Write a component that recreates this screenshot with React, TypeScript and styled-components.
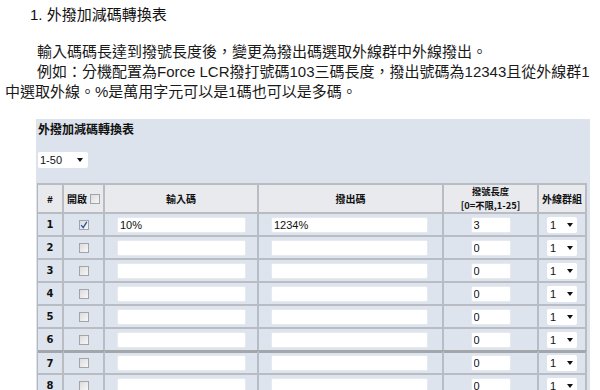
import React from "react";
import styled, { createGlobalStyle } from "styled-components";

const GlobalStyle = createGlobalStyle`
  html, body { margin: 0; padding: 0; background: #fff; }
  body {
    font-family: "Liberation Sans", "Noto Sans CJK TC", sans-serif;
    color: #111;
  }
`;

const Page = styled.div`
  width: 600px;
  height: 390px;
  overflow: hidden;
  padding-top: 6px;
  box-sizing: border-box;
`;

const Heading = styled.h1`
  margin: 0 0 0 30px;
  font-size: 15px;
  font-weight: normal;
  line-height: 18px;
  color: #111;
`;

const Body = styled.div`
  margin-top: 18px;
  padding-left: 5px;
  font-size: 15px;
  line-height: 20px;
  color: #1a1a1a;
`;

const Line = styled.div<{ $indent?: boolean }>`
  white-space: nowrap;
  padding-left: ${(p) => (p.$indent ? "32px" : "0")};
`;

const Panel = styled.section`
  margin: 17px 0 0 36px;
  width: 554px;
  height: 290px;
  box-sizing: border-box;
  background: #dce3ec;
  padding: 2px 3px 0 1px;
`;

const PanelTitle = styled.h2`
  margin: 0 0 0 1px;
  font-family: "Noto Sans CJK TC", sans-serif;
  font-size: 12px;
  font-weight: bold;
  line-height: 16px;
  color: #111;
`;

const Dropdown = styled.div<{ $width: number }>`
  width: ${(p) => p.$width}px;
  height: 16px;
  box-sizing: border-box;
  background: #fff;
  border-radius: 2px;
  display: flex;
  align-items: center;
  justify-content: space-between;
  padding: 0 4px 0 3px;
  font-size: 11px;
  color: #111;
`;

const PageDropdown = styled(Dropdown)`
  margin: 15px 0 0 1px;
  padding-left: 2px;
  padding-right: 5px;
`;

const Arrow = styled.span`
  width: 0;
  height: 0;
  border-left: 3.5px solid transparent;
  border-right: 3.5px solid transparent;
  border-top: 4px solid #111;
`;

const Grid = styled.div`
  margin-top: 15px;
  display: grid;
  grid-template-columns: 26px 41px 154px 185px 95px 48px;
  border-left: 1px solid #b4b8be;
  border-bottom: 2px solid #b4b8be;
`;

const Cell = styled.div<{ $head?: boolean; $thick?: boolean; $align?: "left" | "center"; $pad?: number }>`
  box-sizing: border-box;
  height: ${(p) => (p.$head ? "29px" : "23px")};
  border-top: ${(p) => (p.$thick ? "3px solid #a3a7ac" : "2px solid #b9bdc3")};
  border-right: 2px solid #b9bdc3;
  background: ${(p) => (p.$head ? "#e8eaed" : "#dde4ed")};
  display: flex;
  align-items: center;
  justify-content: ${(p) => (p.$align === "left" ? "flex-start" : "center")};
  padding-left: ${(p) => p.$pad ?? 0}px;
`;

const HeadText = styled.span`
  font-family: "Noto Sans CJK TC", sans-serif;
  font-size: 10px;
  font-weight: bold;
  line-height: 12px;
  color: #111;
  display: inline-flex;
  align-items: center;
  gap: 3px;
`;

const HeadStack = styled.span`
  display: flex;
  flex-direction: column;
  align-items: center;
  font-family: "Noto Sans CJK TC", sans-serif;
  font-size: 9.3px;
  font-weight: bold;
  line-height: 13.5px;
  color: #111;
`;

const RowNum = styled.span`
  font-family: "DejaVu Sans", sans-serif;
  font-size: 10px;
  font-weight: bold;
  color: #111;
`;

const Box = styled.span`
  width: 10px;
  height: 10px;
  box-sizing: border-box;
  border: 1px solid #a2a4a8;
  background: linear-gradient(135deg, #dcdcdc, #f7f7f7);
  display: inline-flex;
  align-items: center;
  justify-content: center;
`;

const Field = styled.input<{ $width: number }>`
  width: ${(p) => p.$width}px;
  height: 16px;
  box-sizing: border-box;
  margin: 0;
  border: 1px solid #e6e9ee;
  border-radius: 2px;
  background: #fff;
  padding: 0 2px;
  font-family: "Liberation Sans", sans-serif;
  font-size: 11px;
  color: #111;
  outline: none;
`;

function Check({ checked }: { checked?: boolean }) {
  return (
    <Box>
      {checked && (
        <svg width="8" height="8" viewBox="0 0 8 8">
          <path d="M1.2 4.2 L3.2 6.6 L6.8 0.8" fill="none" stroke="#2a4fa8" strokeWidth="1.3" />
        </svg>
      )}
    </Box>
  );
}

const rows = [
  { n: 1, on: true, input: "10%", out: "1234%", len: "3" },
  { n: 2, input: "", out: "", len: "0" },
  { n: 3, input: "", out: "", len: "0" },
  { n: 4, input: "", out: "", len: "0" },
  { n: 5, input: "", out: "", len: "0" },
  { n: 6, input: "", out: "", len: "0" },
  { n: 7, input: "", out: "", len: "0" },
  { n: 8, input: "", out: "", len: "0" },
];

export default function App() {
  return (
    <>
      <GlobalStyle />
      <Page>
        <Heading>1. 外撥加減碼轉換表</Heading>
        <Body>
          <Line $indent>輸入碼碼長達到撥號長度後，變更為撥出碼選取外線群中外線撥出。</Line>
          <Line $indent>例如：分機配置為Force LCR撥打號碼103三碼長度，撥出號碼為12343且從外線群1</Line>
          <Line>中選取外線。%是萬用字元可以是1碼也可以是多碼。</Line>
        </Body>
        <Panel>
          <PanelTitle>外撥加減碼轉換表</PanelTitle>
          <PageDropdown $width={50}>
            <span>1-50</span>
            <Arrow />
          </PageDropdown>
          <Grid>
            <Cell $head><HeadText>#</HeadText></Cell>
            <Cell $head><HeadText>開啟<Check /></HeadText></Cell>
            <Cell $head><HeadText>輸入碼</HeadText></Cell>
            <Cell $head><HeadText>撥出碼</HeadText></Cell>
            <Cell $head>
              <HeadStack>
                <span>撥號長度</span>
                <span>[0=不限,1-25]</span>
              </HeadStack>
            </Cell>
            <Cell $head><HeadText>外線群組</HeadText></Cell>
            {rows.map((r) => {
              const thick = r.n === 7;
              return (
                <React.Fragment key={r.n}>
                  <Cell $thick={thick}><RowNum>{r.n}</RowNum></Cell>
                  <Cell $thick={thick}><Check checked={r.on} /></Cell>
                  <Cell $thick={thick} $align="left" $pad={12}>
                    <Field $width={129} defaultValue={r.input} />
                  </Cell>
                  <Cell $thick={thick} $align="left" $pad={12}>
                    <Field $width={157} defaultValue={r.out} />
                  </Cell>
                  <Cell $thick={thick}>
                    <Field $width={40} defaultValue={r.len} />
                  </Cell>
                  <Cell $thick={thick}>
                    <Dropdown $width={30}>
                      <span>1</span>
                      <Arrow />
                    </Dropdown>
                  </Cell>
                </React.Fragment>
              );
            })}
          </Grid>
        </Panel>
      </Page>
    </>
  );
}
